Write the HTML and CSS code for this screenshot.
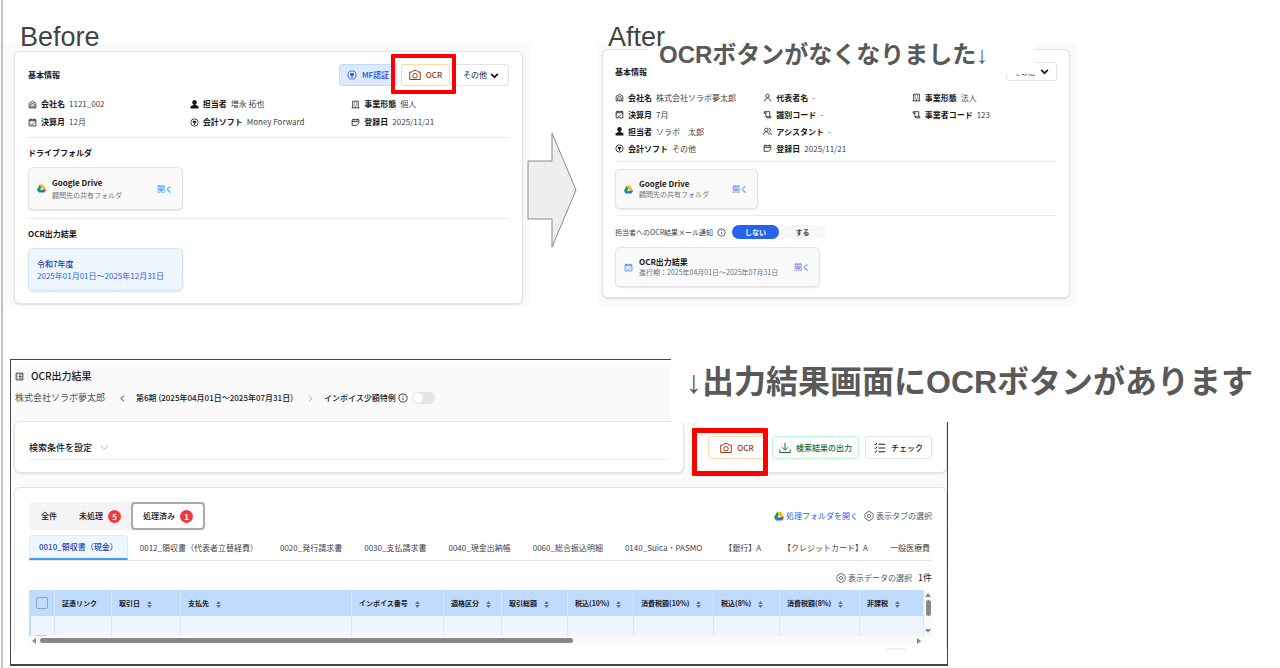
FILE: index.html
```html
<!DOCTYPE html>
<html lang="ja">
<head>
    <meta charset="UTF-8">
    <meta name="viewport" content="width=device-width, initial-scale=1.0">
    <title>OCRボタンの変更点</title>
    <link rel="stylesheet" href="styles.css">
</head>
<body>
    <!-- アイコン -->
    <svg class="sprite" aria-hidden="true">
        <symbol id="i-home" viewBox="0 0 16 16"><path d="M2 6l6-4 6 4v8H2zM5 14V9a3 3 0 0 1 6 0v5M7 11h2"/></symbol>
        <symbol id="i-cal" viewBox="0 0 16 16"><path d="M2 3h12v11H2zM2 5h12M5 1v3M11 1v3M5 10l2 2 4-4"/></symbol>
        <symbol id="i-date" viewBox="0 0 16 16"><path d="M2 3h12v3M2 3v10h8l4-4V7M2 6h12M5 1v3M11 1v3"/></symbol>
        <symbol id="i-user" viewBox="0 0 16 16"><path fill="currentColor" stroke="none" d="M8 0a4 4 0 0 1 2 7.500V9l5 2v4H1v-4l5-2V7.500A4 4 0 0 1 8 0z"/></symbol>
        <symbol id="i-person" viewBox="0 0 16 16"><circle cx="8" cy="5" r="3"/><path d="M3 15c0-8 10-8 10 0"/></symbol>
        <symbol id="i-people" viewBox="0 0 16 16"><circle cx="6" cy="5" r="3"/><path d="M1 14c0-7 10-7 10 0M10 2c4 0 4 6 1 6M12 10c2 1 3 2 3 4"/></symbol>
        <symbol id="i-target" viewBox="0 0 16 16"><circle cx="8" cy="8" r="6.500"/><path fill="currentColor" stroke="none" d="M5 5h6v3l-2 1v3H7V9L5 8z"/></symbol>
        <symbol id="i-build" viewBox="0 0 16 16"><path d="M3 14V2h10v12M1 14h14M6 4v2M10 4v2M6 8v2M10 8v2M8 11v3"/></symbol>
        <symbol id="i-code" viewBox="0 0 16 16"><path d="M5 12V3H2v3h3M5 3h7v9M5 12h9v2H7z"/></symbol>
        <symbol id="i-camera" viewBox="0 0 16 16"><path d="M1 4h3l2-2h4l2 2h3v10H1z"/><circle cx="8" cy="9" r="3"/></symbol>
        <symbol id="i-info" viewBox="0 0 16 16"><circle cx="8" cy="8" r="6.500"/><path d="M8 7v4M8 4v1.500"/></symbol>
        <symbol id="i-down" viewBox="0 0 16 16"><path d="M2 5l6 6 6-6"/></symbol>
        <symbol id="i-left" viewBox="0 0 16 16"><path d="M11 3L5 8l6 5"/></symbol>
        <symbol id="i-right" viewBox="0 0 16 16"><path d="M5 3l6 5-6 5"/></symbol>
        <symbol id="i-list" viewBox="0 0 16 16"><path d="M2 2h12v12H2zM4 5h1M7 5h5M4 8h1M7 8h5M4 11h1M7 11h5"/></symbol>
        <symbol id="i-export" viewBox="0 0 16 16"><path d="M8 1v9M4 7l4 4 4-4M1 10v4h14v-4"/></symbol>
        <symbol id="i-check" viewBox="0 0 16 16"><path d="M1 3l1 1 2-3M1 8l1 1 2-3M1 13l1 1 2-3M6 3h9M6 8h9M6 13h9"/></symbol>
        <symbol id="i-gear" viewBox="0 0 16 16"><path d="M6 1h4l1 2 2 0 2 3-1 2 1 2-2 3h-2l-1 2H6l-1-2H3l-2-3 1-2-1-2 2-3h2z"/><circle cx="8" cy="8" r="2.500"/></symbol>
        <symbol id="i-sort" viewBox="0 0 8 12"><path fill="currentColor" stroke="none" d="M4 0l4 5H0zM4 12l4-5H0z"/></symbol>
        <symbol id="i-drive" viewBox="0 0 16 14">
            <g stroke="none"><path fill="#0f9d58" d="M5 0L0 9l3 5 5-9z"/><path fill="#fbbc04" d="M5 0h6l5 9h-6z"/><path fill="#1a73e8" d="M5 9h11l-3 5H3z"/><path fill="#ea4335" d="M13 14l3-5h-4z"/><path fill="#fff" d="M8 5l2 4H6z"/></g>
        </symbol>
    </svg>

    <main class="slide">
        <div class="compare">
            <section class="side">
                <h2 class="side-title">Before</h2>
                <div class="panel">
                    <div class="card">
                        <div class="card-head">
                            <h3>基本情報</h3>
                            <div class="actions">
                                <button class="btn btn-blue"><svg class="icon icon-md"><use href="#i-target"/></svg>MF認証</button>
                                <div class="marked">
                                    <button class="btn btn-ocr"><svg class="icon icon-lg"><use href="#i-camera"/></svg>OCR</button>
                                    <span class="mark"></span>
                                </div>
                                <div class="drop">
                                    <select aria-label="その他の操作"><option>その他</option></select>
                                    <svg class="icon"><use href="#i-down"/></svg>
                                </div>
                            </div>
                        </div>
                        <dl class="info">
                            <div><svg class="icon"><use href="#i-home"/></svg><dt>会社名</dt><dd>1121_002</dd></div>
                            <div><svg class="icon"><use href="#i-user"/></svg><dt>担当者</dt><dd>増永 拓也</dd></div>
                            <div><svg class="icon"><use href="#i-build"/></svg><dt>事業形態</dt><dd>個人</dd></div>
                            <div><svg class="icon"><use href="#i-cal"/></svg><dt>決算月</dt><dd>12月</dd></div>
                            <div><svg class="icon"><use href="#i-target"/></svg><dt>会計ソフト</dt><dd>Money Forward</dd></div>
                            <div><svg class="icon"><use href="#i-date"/></svg><dt>登録日</dt><dd>2025/11/21</dd></div>
                        </dl>
                        <div class="section">
                            <h3>ドライブフォルダ</h3>
                            <div class="tile">
                                <svg class="icon"><use href="#i-drive"/></svg>
                                <div class="tile-text"><strong>Google Drive</strong><span>顧問先の共有フォルダ</span></div>
                                <a href="#" class="open">開く</a>
                            </div>
                        </div>
                        <div class="section">
                            <h3>OCR出力結果</h3>
                            <a href="#" class="tile tile-year">
                                <div class="tile-text"><strong>令和7年度</strong><span>2025年01月01日～2025年12月31日</span></div>
                            </a>
                        </div>
                    </div>
                </div>
            </section>

            <div class="arrow">
                <svg viewBox="0 0 50 116"><path d="M1 29h24V1l24 57-24 57V87H1z"/></svg>
            </div>

            <section class="side side-after">
                <h2 class="side-title">After</h2>
                <p class="note note-top">OCRボタンがなくなりました<span>↓</span></p>
                <div class="panel">
                    <div class="card">
                        <div class="card-head">
                            <h3>基本情報</h3>
                            <div class="drop">
                                <select aria-label="その他の操作"><option>その他</option></select>
                                <svg class="icon"><use href="#i-down"/></svg>
                            </div>
                        </div>
                        <dl class="info">
                            <div><svg class="icon"><use href="#i-home"/></svg><dt>会社名</dt><dd>株式会社ソラボ夢太郎</dd></div>
                            <div><svg class="icon"><use href="#i-person"/></svg><dt>代表者名</dt><dd>-</dd></div>
                            <div><svg class="icon"><use href="#i-build"/></svg><dt>事業形態</dt><dd>法人</dd></div>
                            <div><svg class="icon"><use href="#i-cal"/></svg><dt>決算月</dt><dd>7月</dd></div>
                            <div><svg class="icon"><use href="#i-code"/></svg><dt>識別コード</dt><dd>-</dd></div>
                            <div><svg class="icon"><use href="#i-code"/></svg><dt>事業者コード</dt><dd>123</dd></div>
                            <div><svg class="icon"><use href="#i-user"/></svg><dt>担当者</dt><dd>ソラボ　太郎</dd></div>
                            <div class="wide"><svg class="icon"><use href="#i-people"/></svg><dt>アシスタント</dt><dd>-</dd></div>
                            <div><svg class="icon"><use href="#i-target"/></svg><dt>会計ソフト</dt><dd>その他</dd></div>
                            <div><svg class="icon"><use href="#i-date"/></svg><dt>登録日</dt><dd>2025/11/21</dd></div>
                        </dl>
                        <div class="section">
                            <div class="tile">
                                <svg class="icon"><use href="#i-drive"/></svg>
                                <div class="tile-text"><strong>Google Drive</strong><span>顧問先の共有フォルダ</span></div>
                                <a href="#" class="open">開く</a>
                            </div>
                        </div>
                        <div class="section">
                            <div class="notify">
                                <span>担当者へのOCR結果メール通知</span>
                                <svg class="icon"><use href="#i-info"/></svg>
                                <div class="pill">
                                    <label><input type="radio" name="mail" checked><span>しない</span></label>
                                    <label><input type="radio" name="mail"><span>する</span></label>
                                </div>
                            </div>
                            <div class="tile tile-result">
                                <svg class="icon icon-blue"><use href="#i-cal"/></svg>
                                <div class="tile-text"><strong>OCR出力結果</strong><span>進行期：2025年04月01日～2025年07月31日</span></div>
                                <a href="#" class="open">開く</a>
                            </div>
                        </div>
                    </div>
                </div>
            </section>
        </div>

        <div class="output">
            <p class="note note-bottom"><span>↓</span>出力結果画面にOCRボタンがあります</p>
            <section class="frame">
                <div class="screen">
                    <header class="screen-head">
                        <h2><svg class="icon"><use href="#i-list"/></svg>OCR出力結果</h2>
                        <div class="period">
                            <span class="company">株式会社ソラボ夢太郎</span>
                            <button class="nav" aria-label="前の期"><svg class="icon"><use href="#i-left"/></svg></button>
                            <strong>第6期 (2025年04月01日～2025年07月31日)</strong>
                            <button class="nav" aria-label="次の期"><svg class="icon icon-gray"><use href="#i-right"/></svg></button>
                            <label class="special" for="special">インボイス少額特例<svg class="icon icon-md"><use href="#i-info"/></svg></label>
                            <input type="checkbox" class="switch" id="special">
                        </div>
                    </header>

                    <div class="tools">
                        <div class="card search">
                            <button>検索条件を設定<svg class="icon icon-gray"><use href="#i-down"/></svg></button>
                        </div>
                        <div class="card tool-buttons">
                            <div class="marked">
                                <button class="btn btn-ocr"><svg class="icon icon-lg"><use href="#i-camera"/></svg>OCR</button>
                                <span class="mark"></span>
                            </div>
                            <button class="btn btn-green"><svg class="icon icon-lg"><use href="#i-export"/></svg>検索結果の出力</button>
                            <button class="btn btn-check"><svg class="icon icon-lg"><use href="#i-check"/></svg>チェック</button>
                        </div>
                    </div>

                    <div class="card results">
                        <div class="bar">
                            <div class="filter">
                                <button>全件</button>
                                <button>未処理<span class="badge">5</span></button>
                                <button class="active">処理済み<span class="badge">1</span></button>
                            </div>
                            <div class="links">
                                <a href="#"><svg class="icon icon-md"><use href="#i-drive"/></svg>処理フォルダを開く</a>
                                <button><svg class="icon icon-md"><use href="#i-gear"/></svg>表示タブの選択</button>
                            </div>
                        </div>
                        <nav class="tabs">
                            <button class="active">0010_領収書（現金）</button>
                            <button>0012_領収書（代表者立替経費）</button>
                            <button>0020_発行請求書</button>
                            <button>0030_支払請求書</button>
                            <button>0040_現金出納帳</button>
                            <button>0060_総合振込明細</button>
                            <button>0140_Suica・PASMO</button>
                            <button>【銀行】A</button>
                            <button>【クレジットカード】A</button>
                            <button>一般医療費</button>
                        </nav>
                        <div class="links count">
                            <button><svg class="icon icon-md"><use href="#i-gear"/></svg>表示データの選択</button>
                            <span>1件</span>
                        </div>
                        <div class="table-area">
                            <table>
                                <thead>
                                    <tr>
                                        <th class="w-check"><input type="checkbox" aria-label="すべて選択"></th>
                                        <th class="w-link">証憑リンク</th>
                                        <th class="w-date">取引日<svg class="sort"><use href="#i-sort"/></svg></th>
                                        <th class="w-payee">支払先<svg class="sort"><use href="#i-sort"/></svg></th>
                                        <th class="w-invoice">インボイス番号<svg class="sort"><use href="#i-sort"/></svg></th>
                                        <th class="w-kind">適格区分<svg class="sort"><use href="#i-sort"/></svg></th>
                                        <th class="w-amount">取引総額<svg class="sort"><use href="#i-sort"/></svg></th>
                                        <th class="w-amount">税込(10%)<svg class="sort"><use href="#i-sort"/></svg></th>
                                        <th class="w-tax">消費税額(10%)<svg class="sort"><use href="#i-sort"/></svg></th>
                                        <th class="w-amount">税込(8%)<svg class="sort"><use href="#i-sort"/></svg></th>
                                        <th class="w-tax">消費税額(8%)<svg class="sort"><use href="#i-sort"/></svg></th>
                                        <th>非課税<svg class="sort"><use href="#i-sort"/></svg></th>
                                    </tr>
                                </thead>
                                <tbody>
                                    <tr><td><span class="peek"></span></td><td></td><td></td><td></td><td></td><td></td><td></td><td></td><td></td><td></td><td></td><td></td></tr>
                                </tbody>
                            </table>
                            <div class="scroll-y"><i class="up"></i><i class="thumb"></i><i class="dn"></i></div>
                            <div class="scroll-x"><i class="lt"></i><i class="thumb"></i><i class="rt"></i></div>
                        </div>
                        <div class="pager"></div>
                    </div>
                </div>
            </section>
        </div>
    </main>
</body>
</html>
```
FILE: styles.css
```css
* {
    box-sizing: border-box;
}
body {
    margin: 0;
    background: #fff;
    color: #18181b;
    font-family: "Noto Sans CJK JP", sans-serif;
    font-size: 8px;
    line-height: 12px;
}
h2, h3, p, dl, dd {
    margin: 0;
}
h3 {
    font-size: 8px;
    font-weight: 700;
}
button, select, input {
    font: inherit;
    color: inherit;
    margin: 0;
}
button {
    display: inline-flex;
    align-items: center;
    padding: 0;
    border: none;
    background: none;
    white-space: nowrap;
    cursor: pointer;
}
a {
    color: #2563eb;
    text-decoration: none;
}
.sprite {
    position: absolute;
    width: 0;
    height: 0;
}
.icon {
    width: 9px;
    height: 9px;
    flex: none;
    fill: none;
    stroke: currentColor;
    stroke-width: 1.4;
}
.icon-md {
    width: 10px;
    height: 10px;
    stroke-width: 1.3;
}
.icon-lg {
    width: 12px;
    height: 12px;
    stroke-width: 1.3;
}
.icon-blue {
    color: #3b82f6;
}
.icon-gray {
    color: #a1a1aa;
}

.slide {
    margin-left: 1px;
    min-height: 668px;
    border-left: 2px solid #bdc1c6;
}
.compare {
    display: grid;
    grid-template-columns: 527fr 68fr 478fr 204fr;
    padding-top: 20px;
}
.side {
    position: relative;
}
.side-title {
    position: relative;
    z-index: 2;
    margin: 0 0 -10px 17px;
    font: 27px/34px "Liberation Sans", sans-serif;
    color: #434343;
}
.side-after .side-title {
    margin-left: 10px;
}
.panel {
    padding: 7px 7px 2px 11px;
    background: #fafafa;
}
.card {
    padding: 12px 13px;
    border: 1px solid #e4e4e7;
    border-radius: 6px;
    background: #fff;
    box-shadow: 0 1px 2px rgba(0, 0, 0, 0.12);
}
.card-head, .actions {
    display: flex;
    align-items: center;
}
.card-head {
    justify-content: space-between;
    margin-bottom: 9px;
}
.actions {
    gap: 4px;
}
.btn {
    justify-content: center;
    gap: 5px;
    height: 22px;
    border: 1px solid #e4e4e7;
    border-radius: 3px;
    background: #fff;
    font-weight: 500;
}
.btn-blue {
    width: 58px;
    border-color: #bfdbfe;
    background: #dbeafe;
    color: #1d4ed8;
}
.btn-ocr {
    width: 49px;
    border-color: #fed7aa;
    color: #9a3412;
}
.btn-green {
    border-color: #bbf7d0;
    color: #166534;
}
.marked {
    position: relative;
}
.mark {
    position: absolute;
    z-index: 1;
    inset: -10px -6px -8px -10px;
    border: 4px solid #f00;
    border-radius: 1px;
    pointer-events: none;
}
.drop {
    position: relative;
}
.drop select {
    display: block;
    width: 55px;
    height: 22px;
    padding: 0 8px;
    appearance: none;
    border: 1px solid #e4e4e7;
    border-radius: 3px;
    background: #fff;
}
.drop .icon {
    position: absolute;
    top: 7px;
    right: 10px;
    stroke-width: 3;
    pointer-events: none;
}
.info {
    display: grid;
    grid-template-columns: repeat(3, 1fr);
    column-gap: 4px;
    line-height: 18px;
    padding-bottom: 6px;
}
.info > div {
    display: flex;
    align-items: center;
    gap: 4px;
    white-space: nowrap;
}
.info .wide {
    grid-column: span 2;
}
.info dt {
    font-weight: 700;
}
.info dd {
    color: #3f3f46;
}
.section {
    border-top: 1px solid #ececee;
    padding: 9px 0 8px;
}
.section:last-child {
    padding-bottom: 0;
}
.section h3 {
    margin-bottom: 8px;
}
.tile {
    display: flex;
    align-items: center;
    gap: 6px;
    width: 155px;
    height: 43px;
    padding: 0 9px 0 8px;
    border: 1px solid #e4e4e7;
    border-radius: 5px;
    background: #fafafa;
    box-shadow: 0 1px 2px rgba(0, 0, 0, 0.1);
}
.tile-text {
    flex: 1;
    white-space: nowrap;
}
.tile-text strong, .tile-text span {
    display: block;
}
.tile-text span {
    font-size: 7px;
    color: #71717a;
}
.tile .open {
    color: #3b82f6;
}
.tile-year {
    border-color: #cfe2fb;
    background: #eff6ff;
}
.tile-year strong {
    color: #1e40af;
    font-weight: 500;
}
.tile-year .tile-text span {
    font-size: 8px;
    color: #2563eb;
}
.arrow svg {
    display: block;
    width: 50px;
    height: 116px;
    margin: 112px 0 0 -3px;
    fill: #eee;
    stroke: #8a8a8a;
    position: relative;
}

/* After側 */
.side-after .panel {
    padding: 5px 6px 7px 4px;
}
.side-after .card {
    padding: 12px 12px 10px;
}
.side-after .card-head {
    margin-bottom: 8px;
}
.side-after .drop select {
    width: 51px;
    height: 19px;
    padding: 0 7px;
    font-size: 7px;
}
.side-after .drop .icon {
    top: 5px;
    right: 8px;
}
.side-after .info {
    column-gap: 3px;
    line-height: 17px;
    padding-bottom: 4px;
}
.side-after .section {
    padding: 7px 0 6px;
}
.side-after .section:last-child {
    padding-bottom: 0;
}
.side-after .tile {
    width: 143px;
    height: 40px;
}
.side-after .tile-text {
    line-height: 11px;
}
.side-after .tile-result {
    width: 205px;
}
.notify {
    display: flex;
    align-items: center;
    gap: 4px;
    margin: 2px 0 8px;
    font-size: 7px;
    color: #3f3f46;
}
.pill {
    display: flex;
    margin-left: 2px;
    border-radius: 7px;
    background: #f7f7f8;
}
.pill input {
    position: absolute;
    opacity: 0;
}
.pill span {
    display: block;
    width: 47px;
    border-radius: 7px;
    line-height: 14px;
    text-align: center;
    font-weight: 700;
}
.pill input:checked + span {
    background: #2563eb;
    color: #fff;
}

/* 注釈 */
.note {
    position: absolute;
    z-index: 1;
    background: #fff;
    color: #595959;
    font-family: "Liberation Sans", "Noto Sans CJK JP", sans-serif;
    font-weight: 700;
    white-space: nowrap;
}
.note span {
    font-weight: 400;
}
.note-top {
    top: 0;
    left: 50px;
    width: 387px;
    height: 54px;
    padding: 17px 0 0 11px;
    font-size: 24px;
    line-height: 36px;
}
.note-bottom {
    top: 0;
    left: 668px;
    right: 0;
    height: 70px;
    padding: 6px 0 0 15px;
    font-size: 32px;
    line-height: 48px;
}

/* 出力結果画面 */
.output {
    position: relative;
    padding: 7px 0 0 7px;
    margin-top: 46px;
}
.frame {
    width: 938px;
    max-width: 100%;
    padding: 6px 0 14px 1px;
    border: 1px solid #444;
    border-bottom-width: 2px;
}
.screen {
    background: #fafafa;
    padding-left: 2px;
}
.screen-head {
    padding: 3px 0 15px 1px;
}
.screen-head h2 {
    display: flex;
    align-items: center;
    gap: 7px;
    font-size: 10px;
    line-height: 14px;
    font-weight: 500;
}
.period {
    display: flex;
    align-items: center;
    margin-top: 7px;
    line-height: 16px;
    white-space: nowrap;
}
.period strong {
    font-weight: 500;
}
.company {
    font-size: 9px;
    color: #52525b;
}
.nav {
    margin: 0 9px 0 13px;
}
.special {
    display: flex;
    align-items: center;
    gap: 2px;
    font-weight: 500;
}
.switch {
    appearance: none;
    display: flex;
    width: 23px;
    height: 12px;
    margin-left: 4px;
    padding: 1px;
    border-radius: 6px;
    background: #e4e4e7;
}
.switch::before {
    content: "";
    width: 10px;
    height: 10px;
    border-radius: 50%;
    background: #fff;
}
.tools {
    display: flex;
    gap: 9px;
    margin-bottom: 14px;
}
.tools .card {
    height: 52px;
    padding: 14px;
}
.search {
    flex: 1;
}
.search button {
    width: 100%;
    height: 24px;
    gap: 8px;
    border-bottom: 1px solid #ececee;
    font-size: 9px;
    font-weight: 500;
}
.tool-buttons {
    display: flex;
    gap: 6px;
}
.tool-buttons .btn {
    height: 23px;
}
.tool-buttons .btn-ocr {
    width: 58px;
}
.tool-buttons .btn-green {
    width: 87px;
}
.tool-buttons .btn-check {
    width: 67px;
}
.tool-buttons .mark {
    inset: -8px -2px -16px -16px;
    height: 48px;
    border-width: 5px;
}
.results.card {
    padding: 14px 14px 0;
    border-bottom: none;
    border-radius: 6px 6px 0 0;
    box-shadow: none;
}
.bar {
    display: flex;
    align-items: center;
    justify-content: space-between;
}
.filter {
    display: flex;
    height: 28px;
    border-radius: 4px;
    background: #f4f4f5;
}
.filter button {
    gap: 5px;
    padding: 0 10px 0 12px;
    font-weight: 500;
}
.filter .active {
    padding: 0 10px;
    border: 2px solid #a8a8b0;
    border-radius: 4px;
    background: #fff;
}
.badge {
    width: 13px;
    border-radius: 50%;
    background: #ef3b3b;
    color: #fff;
    font-weight: 700;
    line-height: 13px;
    text-align: center;
}
.links {
    display: flex;
    gap: 6px;
    color: #52525b;
}
.links a, .links button {
    display: flex;
    align-items: center;
    gap: 2px;
}
.tabs {
    display: flex;
    gap: 2px;
    margin-top: 5px;
    overflow: hidden;
    border-bottom: 1px solid #e4e4e7;
    color: #3f3f46;
}
.tabs button {
    flex: none;
    height: 25px;
    padding: 0 10px;
}
.tabs .active {
    border: 1px solid #dbeafe;
    border-bottom: 2px solid #3b9bff;
    border-radius: 4px 4px 0 0;
    background: #eff6ff;
    color: #1e40af;
    font-weight: 500;
    padding: 0 9px;
}
.count {
    justify-content: flex-end;
    padding: 11px 0 6px;
}
.count span {
    font-size: 9px;
    color: #18181b;
}
.table-area {
    display: grid;
    grid-template-columns: 1fr 8px;
}
table {
    width: 100%;
    table-layout: fixed;
    border-collapse: separate;
    border-spacing: 0;
    font-size: 7px;
}
th, td {
    padding: 0 0 0 7px;
    border-right: 1px solid #dbe7f8;
    text-align: left;
    white-space: nowrap;
}
th {
    height: 26px;
    background: #bfdbfe;
    font-weight: 700;
}
td {
    height: 20px;
    background: #eff6ff;
    vertical-align: bottom;
}
td:first-child {
    box-shadow: inset 2px 0 #bfdbfe;
}
th input {
    display: block;
    appearance: none;
    width: 12px;
    height: 12px;
    border: 1px solid #a1a1aa;
    border-radius: 2px;
}
.peek {
    display: block;
    width: 11px;
    height: 1px;
    background: #a7dcb8;
}
.sort {
    width: 5px;
    height: 7px;
    margin-left: 7px;
    color: #71717a;
    vertical-align: middle;
}
.w-check { width: 26px; }
.w-link { width: 57px; }
.w-date { width: 69px; }
.w-payee { width: 171px; }
.w-invoice { width: 92px; }
.w-kind { width: 58px; }
.w-amount { width: 66px; }
.w-tax { width: 80px; }
.scroll-y, .scroll-x {
    display: flex;
    align-items: center;
    background: #fafafa;
}
.scroll-y {
    flex-direction: column;
    padding: 3px 0;
    gap: 3px;
}
.scroll-x {
    padding: 0 3px;
    gap: 4px;
    height: 9px;
}
.thumb {
    border-radius: 3px;
    background: #888;
}
.scroll-y .thumb {
    width: 5px;
    height: 16px;
}
.scroll-x .thumb {
    width: 60%;
    height: 5px;
}
.up, .dn, .lt, .rt {
    border: 3px solid transparent;
}
.up {
    border-top: none;
    border-bottom: 4px solid #888;
}
.dn {
    margin-top: auto;
    border-bottom: none;
    border-top: 4px solid #888;
}
.lt {
    border-left: none;
    border-right: 4px solid #888;
}
.rt {
    margin-left: auto;
    border-right: none;
    border-left: 4px solid #888;
}
.pager {
    width: 20px;
    height: 2px;
    margin: 3px 26px 0 auto;
    background: #f0f0f0;
}
```
